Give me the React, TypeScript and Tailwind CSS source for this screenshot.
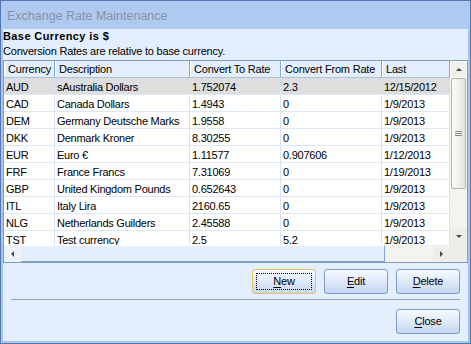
import React from "react";

const rows = [
  ["AUD", "sAustralia Dollars", "1.752074", "2.3", "12/15/2012"],
  ["CAD", "Canada Dollars", "1.4943", "0", "1/9/2013"],
  ["DEM", "Germany Deutsche Marks", "1.9558", "0", "1/9/2013"],
  ["DKK", "Denmark Kroner", "8.30255", "0", "1/9/2013"],
  ["EUR", "Euro €", "1.11577", "0.907606", "1/12/2013"],
  ["FRF", "France Francs", "7.31069", "0", "1/19/2013"],
  ["GBP", "United Kingdom Pounds", "0.652643", "0", "1/9/2013"],
  ["ITL", "Italy Lira", "2160.65", "0", "1/9/2013"],
  ["NLG", "Netherlands Guilders", "2.45588", "0", "1/9/2013"],
  ["TST", "Test currency", "2.5", "5.2", "1/9/2013"],
];

const widths = ["w-[51px]", "w-[135px]", "w-[91px]", "w-[101px]", "w-[68px]"];
const headers = ["Currency", "Description", "Convert To Rate", "Convert From Rate", "Last"];

function Btn({ label, focus }: { label: string; focus?: boolean }) {
  return (
    <div
      className={
        "relative w-[64px] h-[25px] rounded-[3px] border flex items-center justify-center bg-gradient-to-b from-[#f7faff] via-[#dfe9f9] to-[#c4d7f2] " +
        (focus ? "border-[#e3c062]" : "border-[#7f9cc6]")
      }
    >
      {focus && <div className="absolute inset-[3px] border border-dotted border-black" />}
      <span className="tracking-[-0.2px]">
        <span className="underline underline-offset-[2px]">{label[0]}</span>
        {label.slice(1)}
      </span>
    </div>
  );
}

function Tri({ dir }: { dir: "up" | "down" | "left" | "right" }) {
  const pts: Record<string, string> = {
    up: "1,5 4,2 7,5",
    down: "1,2 4,5 7,2",
    left: "5,1 2,4 5,7",
    right: "2,1 5,4 2,7",
  };
  return (
    <svg width="8" height="8" viewBox="0 0 8 8">
      <polygon points={pts[dir]} fill="#4a4a4a" />
    </svg>
  );
}

export default function App() {
  return (
    <div className="w-[471px] h-[344px] flex flex-col bg-[#e3effd] border border-[#5477b0] font-['Liberation_Sans',Arial,sans-serif] text-[11px] text-black overflow-hidden">
      <div className="h-[28px] shrink-0 bg-[#afcaf0] flex items-center pl-[6px] pt-[3px] text-[12.5px] text-[#8793a7]">
        Exchange Rate Maintenance
      </div>
      <div className="flex-1 flex flex-col border-x-2 border-b-2 border-[#a9c5ec] min-h-0">
        <div className="h-[15px] leading-[15px] font-bold tracking-[0.4px]">Base Currency is $</div>
        <div className="h-[16px] leading-[15px] tracking-[-0.2px]">Conversion Rates are relative to base currency.</div>
        <div className="h-[203px] shrink-0 border border-[#7f9db9] flex flex-col bg-white">
          <div className="flex h-[184px]">
            <div className="w-[446px] overflow-hidden flex flex-col">
              <div className="flex h-[17px] shrink-0 bg-[#e3effd] border-b border-[#a9c2e4]">
                {headers.map((h, i) => (
                  <div
                    key={h}
                    className={
                      widths[i] +
                      " shrink-0 h-full border-r border-[#86a9dd] border-l border-l-white pl-[3px] pt-[1px] leading-[15px] tracking-[-0.2px] whitespace-nowrap overflow-hidden"
                    }
                  >
                    {h}
                  </div>
                ))}
              </div>
              {rows.map((r, ri) => (
                <div
                  key={r[0]}
                  className={
                    "flex h-[17px] shrink-0 border-b border-[#dde8f6] " + (ri === 0 ? "bg-[#dedede]" : "bg-white")
                  }
                >
                  {r.map((c, i) => (
                    <div
                      key={i}
                      className={
                        widths[i] +
                        " shrink-0 h-full border-r border-[#d6e3f6] pl-[2px] pt-[1px] leading-[16px] tracking-[-0.25px] whitespace-nowrap overflow-hidden"
                      }
                    >
                      {c}
                    </div>
                  ))}
                </div>
              ))}
            </div>
            <div className="w-[17px] flex flex-col bg-[#f3f3ef]">
              <div className="h-[17px] flex items-center justify-center bg-[#f1f1ec] border border-[#f8f8f4]">
                <Tri dir="up" />
              </div>
              <div className="h-[111px] mx-[1px] rounded-[2px] border border-[#b5b5b0] bg-gradient-to-r from-[#fbfbf9] to-[#e4e4de] flex flex-col items-center justify-center gap-[1px]">
                <div className="w-[7px] h-[1px] bg-[#8c8c88]" />
                <div className="w-[7px] h-[1px] bg-[#8c8c88]" />
                <div className="w-[7px] h-[1px] bg-[#8c8c88]" />
              </div>
              <div className="flex-1" />
              <div className="h-[17px] flex items-center justify-center bg-[#eeeee9]">
                <Tri dir="down" />
              </div>
            </div>
          </div>
          <div className="flex h-[17px]">
            <div className="w-[446px] flex bg-[#f3f3ef]">
              <div className="w-[17px] flex items-center justify-center bg-[#eef3fa]">
                <Tri dir="left" />
              </div>
              <div className="w-[364px] bg-[#e3effd] border-t border-t-white border-r border-b border-[#7ea3d8]" />
              <div className="flex-1" />
              <div className="w-[17px] flex items-center justify-center bg-[#eeeee9]">
                <Tri dir="right" />
              </div>
            </div>
            <div className="w-[17px] bg-[#eeeee9]" />
          </div>
        </div>
        <div className="mt-[6px] h-[25px] flex justify-end gap-[8px] pr-[8px]">
          <Btn label="New" focus />
          <Btn label="Edit" />
          <Btn label="Delete" />
        </div>
        <div className="mt-[5px] mx-[8px] h-[1px] bg-[#8aa3c3]" />
        <div className="mt-[9px] h-[25px] flex justify-end pr-[8px]">
          <Btn label="Close" />
        </div>
      </div>
    </div>
  );
}
